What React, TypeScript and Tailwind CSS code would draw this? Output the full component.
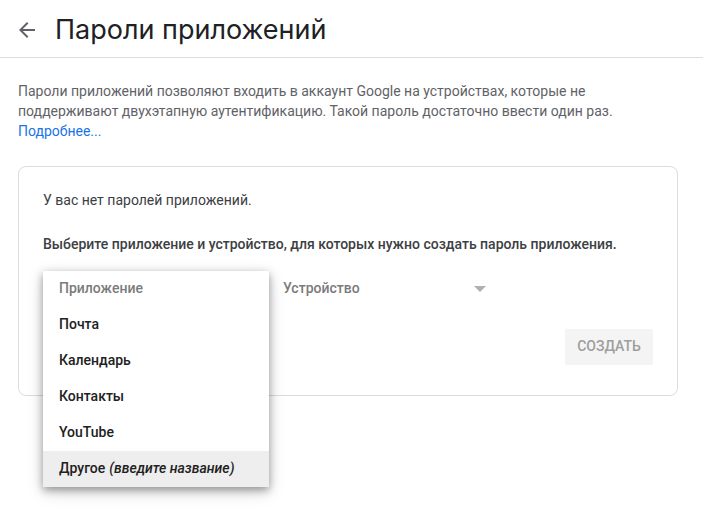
import React, { useState } from "react";
import { MdArrowBack } from "react-icons/md";

const APPS = ["Почта", "Календарь", "Контакты", "YouTube"];
const DEVICES = ["iPhone", "iPad", "BlackBerry", "Mac", "Компьютер Windows"];

function AppMenu() {
  const [active, setActive] = useState("other");
  const option = "flex h-9 cursor-pointer items-center px-4 pb-0.5";
  return (
    <ul
      role="listbox"
      aria-label="Приложение"
      className="absolute inset-x-0 top-0 z-10 bg-white font-medium text-[#212121] shadow-[0_3px_8px_rgba(0,0,0,0.35),0_5px_16px_rgba(0,0,0,0.16)]"
    >
      <li role="option" aria-selected="false" aria-disabled="true" className={`${option} text-[#7b7b7b]`}>
        Приложение
      </li>
      {APPS.map((name) => (
        <li
          key={name}
          role="option"
          aria-selected={active === name}
          onMouseEnter={() => setActive(name)}
          className={`${option} ${active === name ? "bg-[#eeeeee]" : ""}`}
        >
          {name}
        </li>
      ))}
      <li
        role="option"
        aria-selected={active === "other"}
        onMouseEnter={() => setActive("other")}
        className={`${option} gap-1 ${active === "other" ? "bg-[#eeeeee]" : ""}`}
      >
        Другое <em>(введите название)</em>
      </li>
    </ul>
  );
}

export default function App() {
  return (
    <div className="min-h-screen bg-white font-['Roboto',sans-serif] text-sm leading-5 text-[#3c4043]">
      <header className="flex h-[58px] items-center gap-4 border-b border-[#dadce0] px-[15px] pt-0.5">
        <button type="button" aria-label="Назад" className="text-[#5f6368]">
          <MdArrowBack size={24} />
        </button>
        <h1 className="font-['Inter','Roboto',sans-serif] text-[27px] leading-9 font-normal text-[#202124]">
          Пароли приложений
        </h1>
      </header>

      <main className="px-[18px] pt-[23px] pb-6">
        <div className="max-w-[660px]">
          <p className="pr-8 text-[#5f6368]">
            Пароли приложений позволяют входить в аккаунт Google на устройствах, которые не поддерживают двухэтапную
            аутентификацию. Такой пароль достаточно ввести один раз.{" "}
            <a href="#more" className="block text-[#1a73e8]">
              Подробнее...
            </a>
          </p>

          <section className="mt-[25px] rounded-lg border border-[#dadce0] px-6 pt-[23px] pb-[30px]">
            <p>У вас нет паролей приложений.</p>
            <h2 className="mt-6 font-medium">
              Выберите приложение и устройство, для которых нужно создать пароль приложения.
            </h2>

            <form onSubmit={(e) => e.preventDefault()}>
              <div className="mt-[17px] flex">
                <div className="relative h-9 w-[226px]">
                  <AppMenu />
                </div>
                <div className="grid w-[226px] items-center">
                  <select
                    aria-label="Устройство"
                    defaultValue=""
                    className="col-start-1 row-start-1 h-9 w-full appearance-none bg-transparent pr-8 pb-0.5 pl-[14px] font-medium text-[#7b7b7b]"
                  >
                    <option value="" disabled>
                      Устройство
                    </option>
                    {DEVICES.map((d) => (
                      <option key={d}>{d}</option>
                    ))}
                  </select>
                  <svg
                    viewBox="0 0 12 6"
                    className="pointer-events-none col-start-1 row-start-1 mr-[9px] h-[6px] w-3 justify-self-end fill-[#b0b0b0]"
                    aria-hidden="true"
                  >
                    <path d="M0 0h12L6 6z" />
                  </svg>
                </div>
              </div>
              <div className="mt-[22px] flex justify-end">
                <button
                  type="submit"
                  disabled
                  className="h-9 w-[88px] rounded-xs bg-[#f4f4f4] pb-0.5 font-medium text-[#9e9e9e] uppercase"
                >
                  Создать
                </button>
              </div>
            </form>
          </section>
        </div>
      </main>
    </div>
  );
}
